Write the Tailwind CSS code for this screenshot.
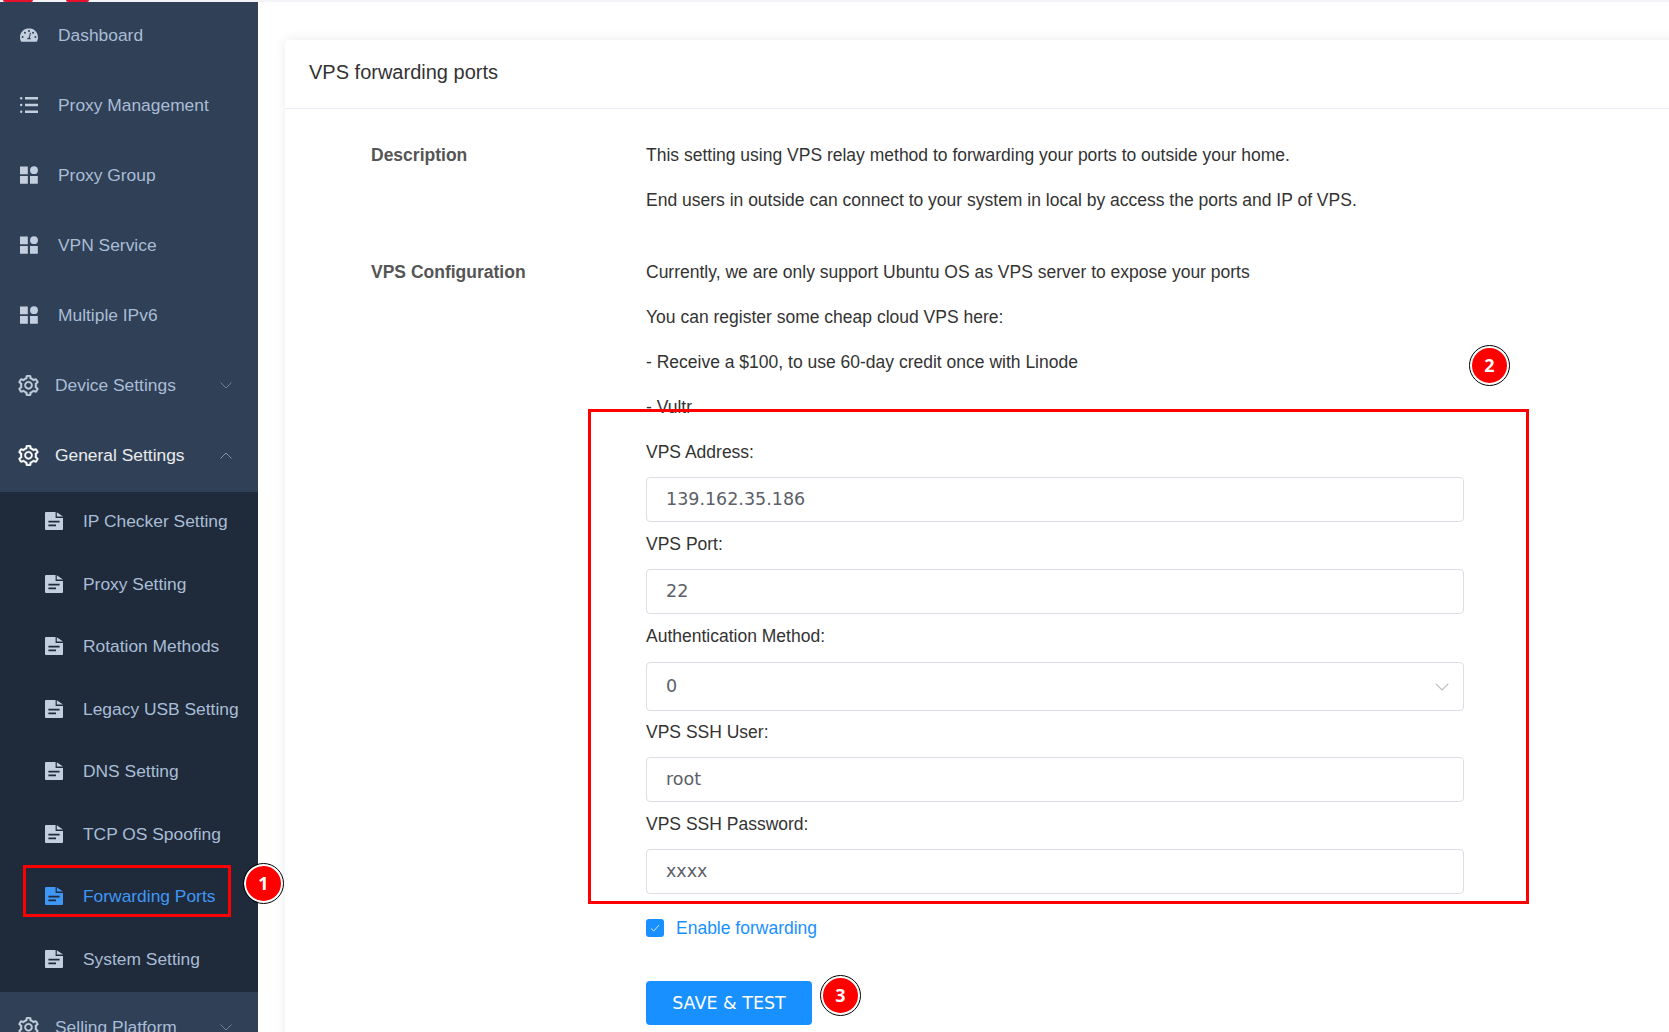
<!DOCTYPE html>
<html>
<head>
<meta charset="utf-8">
<script src="https://cdn.jsdelivr.net/npm/@tailwindcss/browser@4"></script>
</head>
<body class="m-0 bg-white font-['Liberation_Sans',Arial,sans-serif]">
<svg class="hidden" width="0" height="0">
  <defs>
    <symbol id="gauge" viewBox="0 0 18 18"><path fill="currentColor" fill-rule="evenodd" d="M9 2.200C4 2.200 0 6.200 0 11.200c0 1.700.5 3.200 1.300 4.600h15.400c.8-1.400 1.300-2.900 1.300-4.600 0-5-4-9-9-9zM9 4a1 1 0 110 2 1 1 0 010-2zM4.900 5.800a1 1 0 110 2 1 1 0 010-2zM13.100 5.800a1 1 0 110 2 1 1 0 010-2zM2.600 10.100a1 1 0 110 2 1 1 0 010-2zM15.400 10.100a1 1 0 110 2 1 1 0 010-2zM10.900 6.800l-1 4.900c.6.3 1 .9 1 1.600H7.100c0-1 .8-1.900 1.800-1.900l1-4.700z"/></symbol>
    <symbol id="list" viewBox="0 0 18 18"><path fill="currentColor" d="M5 1h13v2.600H5zM5 7.700h13v2.600H5zM5 14.400h13V17H5z"/><circle fill="currentColor" cx="1.200" cy="2.200" r="1.200"/><circle fill="currentColor" cx="1.200" cy="9" r="1.200"/><circle fill="currentColor" cx="1.200" cy="15.800" r="1.200"/></symbol>
    <symbol id="apps" viewBox="0 0 18 18"><path fill="currentColor" d="M0 .5h7.800v7.800H0zM0 10h7.800v7.800H0zM10 10h7.800v7.800H10z"/><circle fill="currentColor" cx="14" cy="4.200" r="3.900"/></symbol>
    <symbol id="gear" viewBox="64 64 896 896"><path fill="currentColor" stroke="currentColor" stroke-width="18" d="M924.8 625.7l-65.5-56c3.1-19 4.7-38.4 4.7-57.8s-1.6-38.8-4.7-57.8l65.5-56a32.03 32.03 0 0 0 9.3-35.2l-.9-2.6a443.74 443.74 0 0 0-79.7-137.9l-1.8-2.1a32.12 32.12 0 0 0-35.1-9.5l-81.3 28.9c-30-24.6-63.5-44-99.7-57.6l-15.7-85a32.05 32.05 0 0 0-25.8-25.7l-2.7-.5c-52.1-9.4-106.9-9.4-159 0l-2.7.5a32.05 32.05 0 0 0-25.8 25.7l-15.8 85.4a351.86 351.86 0 0 0-99 57.4l-81.9-29.1a32 32 0 0 0-35.1 9.5l-1.8 2.1a446.02 446.02 0 0 0-79.7 137.9l-.9 2.6c-4.5 12.5-.8 26.5 9.3 35.2l66.3 56.6c-3.1 18.8-4.6 38-4.6 57.1 0 19.2 1.5 38.4 4.6 57.1L99 625.5a32.03 32.03 0 0 0-9.3 35.2l.9 2.6c18.1 50.4 44.9 96.9 79.7 137.9l1.8 2.1a32.12 32.12 0 0 0 35.1 9.5l81.9-29.1c29.8 24.5 63.1 43.9 99 57.4l15.8 85.4a32.05 32.05 0 0 0 25.8 25.7l2.7.5a449.4 449.4 0 0 0 159 0l2.7-.5a32.05 32.05 0 0 0 25.8-25.7l15.7-85a350 350 0 0 0 99.7-57.6l81.3 28.9a32 32 0 0 0 35.1-9.5l1.8-2.1c34.8-41.1 61.6-87.5 79.7-137.9l.9-2.6c4.5-12.3.8-26.3-9.3-35zM788.3 465.9c2.5 15.1 3.8 30.6 3.8 46.1s-1.3 31-3.8 46.1l-6.6 40.1 74.7 63.9a370.03 370.03 0 0 1-42.6 73.6L721 702.8l-31.4 25.8c-23.9 19.6-50.5 35-79.3 45.8l-38.1 14.3-17.9 97a377.5 377.5 0 0 1-85 0l-17.9-97.2-37.8-14.5c-28.5-10.8-55-26.2-78.7-45.7l-31.4-25.9-93.4 33.2c-17-22.9-31.2-47.6-42.6-73.6l75.5-64.5-6.5-40c-2.4-14.9-3.7-30.3-3.7-45.5 0-15.3 1.2-30.6 3.7-45.5l6.5-40-75.5-64.5c11.3-26.1 25.6-50.7 42.6-73.6l93.4 33.2 31.4-25.9c23.7-19.5 50.2-34.9 78.7-45.7l37.9-14.3 17.9-97.2c28.1-3.2 56.8-3.2 85 0l17.9 97 38.1 14.3c28.7 10.8 55.4 26.2 79.3 45.8l31.4 25.8 92.8-32.9c17 22.9 31.2 47.6 42.6 73.6L781.8 426l6.5 39.9zM512 326c-97.2 0-176 78.8-176 176s78.8 176 176 176 176-78.8 176-176-78.8-176-176-176zm79.2 255.2A111.6 111.6 0 0 1 512 614c-29.9 0-58-11.7-79.2-32.8A111.6 111.6 0 0 1 400 502c0-29.9 11.7-58 32.8-79.2C454 401.6 482.1 390 512 390c29.9 0 58 11.6 79.2 32.8A111.6 111.6 0 0 1 624 502c0 29.9-11.7 58-32.8 79.2z"/></symbol>
    <symbol id="doc" viewBox="0 0 18 18"><path fill="currentColor" fill-rule="evenodd" d="M1 0h9.600v6h7.400v11a1 1 0 01-1 1H1a1 1 0 01-1-1V1a1 1 0 011-1zM3.400 8.800v1.600h11.200V8.800zM3.400 12.600v1.600h7.600v-1.600zM11.800.2L18 4.600h-6.200z"/></symbol>
    <symbol id="down" viewBox="0 0 12 7"><path d="M.5.5L6 6 11.500.5" fill="none" stroke="currentColor" stroke-width="1"/></symbol>
    <symbol id="up" viewBox="0 0 12 7"><path d="M.5 6.500L6 1l5.500 5.500" fill="none" stroke="currentColor" stroke-width="1"/></symbol>
  </defs>
</svg>

<div class="relative flex h-[1032px] w-[1669px] overflow-hidden">
  <!-- top strip -->
  <div class="absolute left-0 top-0 z-10 flex h-[2px] w-full bg-[#f3f4f7]">
    <div class="ml-[3px] h-full w-[30px] rounded-b-[2px] bg-[#e8112d]"></div>
    <div class="ml-[33px] h-full w-[23px] rounded-b-[2px] bg-[#e8112d]"></div>
  </div>

  <!-- sidebar -->
  <aside class="w-[258px] shrink-0 bg-[#304057] text-[17.4px] text-[#a9bdd6]">
    <div class="flex h-[70px] items-center pl-[20px]"><svg class="size-[18px] shrink-0 text-[#c3cfde]"><use href="#gauge"/></svg><span class="ml-[20px] pt-[1px]">Dashboard</span></div>
    <div class="flex h-[70px] items-center pl-[20px]"><svg class="size-[18px] shrink-0 text-[#c3cfde]"><use href="#list"/></svg><span class="ml-[20px] pt-[1px]">Proxy Management</span></div>
    <div class="flex h-[70px] items-center pl-[20px]"><svg class="size-[18px] shrink-0 text-[#c3cfde]"><use href="#apps"/></svg><span class="ml-[20px] pt-[1px]">Proxy Group</span></div>
    <div class="flex h-[70px] items-center pl-[20px]"><svg class="size-[18px] shrink-0 text-[#c3cfde]"><use href="#apps"/></svg><span class="ml-[20px] pt-[1px]">VPN Service</span></div>
    <div class="flex h-[70px] items-center pl-[20px]"><svg class="size-[18px] shrink-0 text-[#c3cfde]"><use href="#apps"/></svg><span class="ml-[20px] pt-[1px]">Multiple IPv6</span></div>
    <div class="flex h-[70px] items-center pl-[18px]"><svg class="size-[21px] shrink-0 text-[#c3cfde]"><use href="#gear"/></svg><span class="ml-[16px] pt-[1px]">Device Settings</span><svg class="ml-auto mr-[26px] h-[7px] w-[12px] text-[#6f8199]"><use href="#down"/></svg></div>
    <div class="flex h-[70px] items-center pl-[18px] text-white/90"><svg class="size-[21px] shrink-0 text-white"><use href="#gear"/></svg><span class="ml-[16px] pt-[1px]">General Settings</span><svg class="ml-auto mr-[26px] h-[7px] w-[12px] text-[#8595aa]"><use href="#up"/></svg></div>
    <div class="mt-[2px] h-[500px] bg-[#1f2b3b]">
      <div class="mb-[4.5px] flex h-[58px] items-center pl-[45px]"><svg class="size-[18px] shrink-0 text-[#c3cfde]"><use href="#doc"/></svg><span class="ml-[20px] pt-[1px]">IP Checker Setting</span></div>
      <div class="mb-[4.5px] flex h-[58px] items-center pl-[45px]"><svg class="size-[18px] shrink-0 text-[#c3cfde]"><use href="#doc"/></svg><span class="ml-[20px] pt-[1px]">Proxy Setting</span></div>
      <div class="mb-[4.5px] flex h-[58px] items-center pl-[45px]"><svg class="size-[18px] shrink-0 text-[#c3cfde]"><use href="#doc"/></svg><span class="ml-[20px] pt-[1px]">Rotation Methods</span></div>
      <div class="mb-[4.5px] flex h-[58px] items-center pl-[45px]"><svg class="size-[18px] shrink-0 text-[#c3cfde]"><use href="#doc"/></svg><span class="ml-[20px] pt-[1px]">Legacy USB Setting</span></div>
      <div class="mb-[4.5px] flex h-[58px] items-center pl-[45px]"><svg class="size-[18px] shrink-0 text-[#c3cfde]"><use href="#doc"/></svg><span class="ml-[20px] pt-[1px]">DNS Setting</span></div>
      <div class="mb-[4.5px] flex h-[58px] items-center pl-[45px]"><svg class="size-[18px] shrink-0 text-[#c3cfde]"><use href="#doc"/></svg><span class="ml-[20px] pt-[1px]">TCP OS Spoofing</span></div>
      <div class="mb-[4.5px] flex h-[58px] items-center pl-[45px] text-[#3f97f5]"><svg class="size-[18px] shrink-0"><use href="#doc"/></svg><span class="ml-[20px] pt-[1px]">Forwarding Ports</span></div>
      <div class="mb-[4.5px] flex h-[58px] items-center pl-[45px]"><svg class="size-[18px] shrink-0 text-[#c3cfde]"><use href="#doc"/></svg><span class="ml-[20px] pt-[1px]">System Setting</span></div>
    </div>
    <div class="flex h-[70px] items-center pl-[18px]"><svg class="size-[21px] shrink-0 text-[#c3cfde]"><use href="#gear"/></svg><span class="ml-[16px] pt-[1px]">Selling Platform</span><svg class="ml-auto mr-[26px] h-[7px] w-[12px] text-[#6f8199]"><use href="#down"/></svg></div>
  </aside>

  <!-- main -->
  <main class="min-w-0 flex-1 pl-[27px] pt-[40px]">
    <div class="h-[1100px] w-[1500px] rounded-tl-[4px] bg-white shadow-[0_0_12px_rgba(60,60,110,0.10)]">
      <div class="flex h-[69px] items-center border-b border-[#ebedf5] pb-[4px] pl-[24px] text-[20px] text-[#333]">VPS forwarding ports</div>
      <div class="pl-[86px] pt-[24px] text-[17.5px] text-[#333]">
        <div class="flex">
          <div class="w-[275px] shrink-0 font-bold leading-[45px] text-[#555]">Description</div>
          <div class="leading-[45px]">
            <p>This setting using VPS relay method to forwarding your ports to outside your home.</p>
            <p>End users in outside can connect to your system in local by access the ports and IP of VPS.</p>
          </div>
        </div>
        <div class="mt-[27px] flex">
          <div class="w-[275px] shrink-0 font-bold leading-[45px] text-[#555]">VPS Configuration</div>
          <div class="w-[818px] leading-[45px]">
            <p>Currently, we are only support Ubuntu OS as VPS server to expose your ports</p>
            <p>You can register some cheap cloud VPS here:</p>
            <p>- Receive a $100, to use 60-day credit once with Linode</p>
            <p>- Vultr</p>
            <p class="mb-[2px]">VPS Address:</p>
            <div class="flex h-[45px] items-center rounded-[4px] border border-[#dcdde6] pl-[19px] font-['DejaVu_Sans',sans-serif] text-[17.5px] text-[#5c6068]">139.162.35.186</div>
            <p class="mb-[2px]">VPS Port:</p>
            <div class="flex h-[45px] items-center rounded-[4px] border border-[#dcdde6] pl-[19px] font-['DejaVu_Sans',sans-serif] text-[17.5px] text-[#5c6068]">22</div>
            <p class="mb-[3px]">Authentication Method:</p>
            <div class="flex h-[49px] items-center justify-between rounded-[4px] border border-[#dcdde6] pl-[19px] pr-[14px] font-['DejaVu_Sans',sans-serif] text-[17.5px] text-[#5c6068]">0<svg class="h-[8px] w-[14px] text-[#b9bbc4]"><use href="#down"/></svg></div>
            <p class="-mt-[1px] mb-[2px]">VPS SSH User:</p>
            <div class="flex h-[45px] items-center rounded-[4px] border border-[#dcdde6] pl-[19px] font-['DejaVu_Sans',sans-serif] text-[17.5px] text-[#5c6068]">root</div>
            <p class="mb-[2px]">VPS SSH Password:</p>
            <div class="flex h-[45px] items-center rounded-[4px] border border-[#dcdde6] pl-[19px] font-['DejaVu_Sans',sans-serif] text-[17.5px] text-[#5c6068]">xxxx</div>
            <div class="mt-[25px] flex h-[18px] items-center">
              <div class="flex size-[18px] items-center justify-center rounded-[3px] bg-[#1890ff]"><svg class="size-[12px] text-white/80" viewBox="0 0 12 12"><path d="M2 6.500L4.800 9 10 3" fill="none" stroke="currentColor" stroke-width="1"/></svg></div>
              <span class="ml-[12px] text-[#1890ff]">Enable forwarding</span>
            </div>
            <div class="mt-[44px] flex h-[44px] w-[166px] items-center justify-center rounded-[4px] bg-[#1890ff] font-['DejaVu_Sans',sans-serif] text-[17.5px] text-white">SAVE &amp; TEST</div>
          </div>
        </div>
      </div>
    </div>
  </main>

  <!-- annotations -->
  <div class="absolute left-[23px] top-[865px] h-[52px] w-[208px] border-[3px] border-[#ff0000]"></div>
  <div class="absolute left-[588px] top-[409px] h-[495px] w-[941px] border-[3px] border-[#ff0000]"></div>
  <div class="absolute left-[244px] top-[864px] flex size-[39px] items-center justify-center rounded-full border-[2px] border-white bg-[#ff0000] font-['Noto_Sans',sans-serif] text-[18px] font-bold text-white outline outline-1 outline-black">1</div>
  <div class="absolute left-[1470px] top-[346px] flex size-[39px] items-center justify-center rounded-full border-[2px] border-white bg-[#ff0000] font-['Noto_Sans',sans-serif] text-[18px] font-bold text-white outline outline-1 outline-black">2</div>
  <div class="absolute left-[821px] top-[976px] flex size-[39px] items-center justify-center rounded-full border-[2px] border-white bg-[#ff0000] font-['Noto_Sans',sans-serif] text-[18px] font-bold text-white outline outline-1 outline-black">3</div>
</div>
</body>
</html>
